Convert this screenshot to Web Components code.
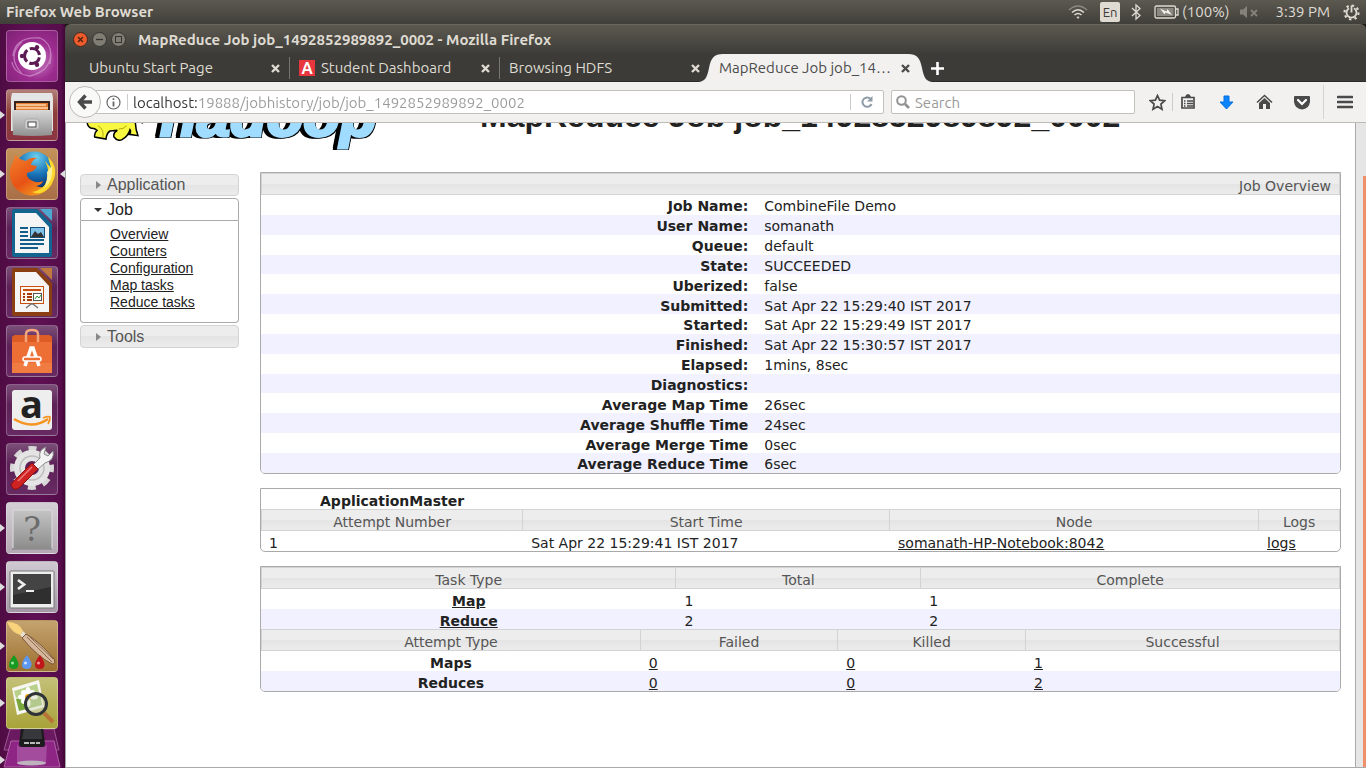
<!DOCTYPE html>
<html lang="en">
<head>
<meta charset="utf-8">
<title>MapReduce Job job_1492852989892_0002</title>
<style>
  body { margin: 0; font-family: Ubuntu, "Noto Sans", sans-serif; font-size: 15px; color: #222; }
</style>
</head>
<body>
<unity-desktop>
  <top-panel slot="panel"></top-panel>
  <app-launcher slot="launcher"></app-launcher>
  <browser-window slot="window" heading="MapReduce Job job_1492852989892_0002 - Mozilla Firefox">
    <browser-tab slot="tabs" label="Ubuntu Start Page"></browser-tab>
    <browser-tab slot="tabs" label="Student Dashboard" icon="A"></browser-tab>
    <browser-tab slot="tabs" label="Browsing HDFS" last></browser-tab>
    <browser-tab slot="tabs" label="MapReduce Job job_14…" active></browser-tab>
    <nav-toolbar slot="toolbar"></nav-toolbar>
    <history-page>
      <history-header slot="header"></history-header>
      <side-nav slot="nav"></side-nav>
      <job-overview></job-overview>
      <app-master></app-master>
      <task-summary></task-summary>
    </history-page>
  </browser-window>
</unity-desktop>

<script>
const define = (name, html, setup) => {
  const template = document.createElement('template');
  template.innerHTML = html;
  customElements.define(name, class extends HTMLElement {
    constructor() {
      super();
      this.attachShadow({ mode: 'open' }).append(template.content.cloneNode(true));
    }
    connectedCallback() { if (setup) setup(this, this.shadowRoot); }
  });
};

define('unity-desktop', `
<style>
  :host { display: grid; grid-template: 24px minmax(0, 1fr) / 65px minmax(0, 1fr); height: 100vh; background: #1e1b18; overflow: hidden; }
  .panel { grid-column: 1 / -1; }
  .launcher, .window { min-height: 0; display: grid; }
</style>
<div class="panel"><slot name="panel"></slot></div>
<div class="launcher"><slot name="launcher"></slot></div>
<div class="window"><slot name="window"></slot></div>`);

define('top-panel', `
<style>
  :host { display: flex; align-items: center; justify-content: space-between; height: 24px; padding: 0 6px;
    background: linear-gradient(#5c5950, #403f3a); color: #dfdbd2; line-height: 20px; }
  b { font-weight: 700; }
  .tray { display: flex; align-items: center; }
  svg { display: block; }
  .wifi { margin-right: 12px; }
  .lang { background: #dfdbd2; color: #3c3b37; border-radius: 2px; width: 20px; text-align: center; font-size: 13px; margin-right: 10px; }
  .bt { margin-right: 12px; }
  .battery { margin-right: 3px; }
  .sound { margin: 0 17px 0 11px; }
  .gear { margin-left: 13px; }
</style>
<b>Firefox Web Browser</b>
<div class="tray">
  <svg class="wifi" width="20" height="16" viewBox="0 0 20 16" fill="none" stroke="#dfdbd2" stroke-width="1.6"><path d="M1 6Q10-2 19 6" stroke="#8d8a82"/><path d="M4 8.500Q10 3 16 8.500M6.500 11Q10 8 13.500 11"/><path d="M8.500 13L10 15L11.500 13Q10 12 8.500 13Z" fill="#dfdbd2" stroke="none"/></svg>
  <span class="lang">En</span>
  <svg class="bt" width="12" height="18" viewBox="0 0 12 18" fill="none" stroke="#dfdbd2" stroke-width="1.300"><path d="M2 5L10 12.500L6 16V2L10 5.500L2 13"/></svg>
  <svg class="battery" width="25" height="14" viewBox="0 0 25 14"><rect x="1" y="1" width="20.500" height="12" rx="1.500" fill="none" stroke="#dfdbd2" stroke-width="1.300"/><rect x="3" y="3" width="16.500" height="8" fill="#8b887f"/><path d="M22 4h2v6h-2" fill="none" stroke="#dfdbd2" stroke-width="1.300"/><path d="M6 3.500L12.500 6.500L13.500 4L18 10L11.500 7.500L10.500 9.500Z" fill="#f2efe8"/></svg>
  <span>(100%)</span>
  <svg class="sound" width="18" height="12" viewBox="0 0 18 12"><path d="M0 3.500h3L7 0v12L3 8.500H0Z" fill="#85827a"/><path d="M11 4L17 10M17 4L11 10" stroke="#85827a" stroke-width="1.800"/></svg>
  <span>3:39 PM</span>
  <svg class="gear" width="17" height="17" viewBox="0 0 17 17" fill="none" stroke="#dfdbd2"><circle cx="8.500" cy="8.500" r="7" stroke-width="2.200" stroke-dasharray="2.400 3.100"/><path d="M6 4.300A5 5 0 1 0 11 4.300M8.500 1.500V8.500" stroke-width="1.800"/></svg>
</div>`);

define('launcher-item', `
<style>
  :host { display: grid; grid-template-columns: 6px 52px 7px; align-items: center; height: 52px; }
  .tile { width: 52px; height: 52px; box-sizing: border-box; border-radius: 4px; border: 1px solid rgba(255,255,255,.25);
    background: var(--tile, linear-gradient(#7a4f78, #5d2157 40%, #672a62)); padding: 0; }
  ::slotted(svg) { display: block; margin: -1px; overflow: visible; }
  .mark { width: 0; height: 0; border: 4px solid transparent; border-right-width: 0; border-left: 5px solid #ddd; visibility: hidden; }
  .mark.right { border-right: 5px solid #ddd; border-left-width: 0; justify-self: end; }
  :host([running]) .left, :host([focused]) .right { visibility: visible; }
</style>
<span class="mark left"></span><button class="tile" type="button"><slot></slot></button><span class="mark right"></span>`,
(host, root) => root.querySelector('button').setAttribute('aria-label', host.getAttribute('name') || ''));

define('app-launcher', `
<style>
  :host { display: flex; flex-direction: column; gap: 7px; padding-top: 6px; box-sizing: border-box; overflow: hidden; min-height: 0;
    background: linear-gradient(90deg, #4f0c43, #5f1054 50%, #560d4b 94%, #3e0735); }
  launcher-item, .folded { flex: none; }
  .lens { margin-top: -2px; margin-bottom: -9px; position: relative; z-index: 1; }
  .folded { display: block; }
  text { user-select: none; }
</style>
<launcher-item name="Search" style="--tile:radial-gradient(circle at 60% 60%,#c77fc2,#9d2c90 45%,#7d2173)">
  <svg width="52" height="52" viewBox="0 0 52 52"><path d="M7 26Q9 6 34 8Q48 14 44 34M44 18Q48 40 24 46Q8 44 6 32M16 12Q0 26 16 44" fill="none" stroke="#d9a5d6" stroke-opacity=".6" stroke-width="1.300"/><circle cx="26" cy="26" r="14" fill="#fff"/><circle cx="26" cy="26" r="7.500" fill="none" stroke="#5c1a53" stroke-width="3" stroke-dasharray="13 2.700" stroke-dashoffset="-1.400"/><circle cx="16" cy="26" r="2.200" fill="#5c1a53"/><circle cx="31" cy="17.300" r="2.200" fill="#5c1a53"/><circle cx="31" cy="34.700" r="2.200" fill="#5c1a53"/></svg></launcher-item>
<launcher-item name="Files" running style="--tile:linear-gradient(#b28078,#8e3f38 45%,#8b3542)">
  <svg width="52" height="52" viewBox="0 0 52 52"><defs><linearGradient id="f" x2="0" y2="1"><stop stop-color="#d8d8d8"/><stop offset="1" stop-color="#909090"/></linearGradient></defs><path d="M6 4H46L47 9V42H5V9Z" fill="#e4e4e4"/><rect x="8" y="12" width="36" height="11" fill="#3a2420"/><path d="M10 14H42V22H10Z" fill="#e37b31"/><path d="M10 16H40M10 19H42" stroke="#fbd7ad" stroke-width="1.300"/><path d="M6 21H46V46Q26 48 7 46Z" fill="url(#f)"/><rect x="19" y="30" width="14" height="10" rx="2" fill="#d2d2d2" stroke="#aaa"/><rect x="22" y="33" width="8" height="5" fill="#fff" stroke="#444"/></svg></launcher-item>
<launcher-item name="Firefox" running focused style="--tile:linear-gradient(#c39159,#a96f48)">
  <svg width="52" height="52" viewBox="0 0 52 52"><defs><radialGradient id="w" cx=".55" cy=".15" r=".8"><stop stop-color="#6fd0ee"/><stop offset=".55" stop-color="#1874b8"/><stop offset="1" stop-color="#0b2d6b"/></radialGradient><linearGradient id="x" x2=".7" y2="1"><stop stop-color="#f4802a"/><stop offset=".6" stop-color="#e65215"/><stop offset="1" stop-color="#f59a20"/></linearGradient></defs><circle cx="28" cy="23" r="19.500" fill="url(#w)"/><path d="M8 12Q3 20 4 28Q6 44 24 47.500Q40 48 47 34Q40 42 30 38Q36 37 37 33Q31 36 25 32Q20 29 21 25L27 23Q30 21 31 18L25 17Q25 13 31 10Q24 9 20 13Q14 12 9 7Z" fill="url(#x)"/><path d="M42 9Q52 18 48 31Q44 42 35 45Q30 46 26 44Q38 42 41 32Q44 22 39 13L45 20Z" fill="#fcd72c"/><path d="M46 18Q48 32 38 41Q42 32 41 24Z" fill="#fdf09a"/></svg></launcher-item>
<launcher-item name="Writer">
  <svg width="52" height="52" viewBox="0 0 52 52"><path d="M8 2H31L46 17V48Q46 50 44 50H8Q6 50 6 48V4Q6 2 8 2Z" fill="#13648f"/><path d="M34 2H46V14Z" fill="#4ea7cf"/><path d="M9 6H30L43 20V46H9Z" fill="#f5f5f5"/><path d="M14 21H22M14 25H22M14 29H22M14 33H38M14 37H38M14 41H32" stroke="#135f8c" stroke-width="2"/><rect x="24.500" y="20.500" width="14" height="10" fill="#7ec2e8" stroke="#134f77"/><path d="M25 30L29 24L32 27L35 25L38 30Z" fill="#333"/></svg></launcher-item>
<launcher-item name="Impress">
  <svg width="52" height="52" viewBox="0 0 52 52"><path d="M8 2H31L46 17V48Q46 50 44 50H8Q6 50 6 48V4Q6 2 8 2Z" fill="#8b3e12"/><path d="M34 2H46V14Z" fill="#c07840"/><path d="M9 6H30L43 20V46H9Z" fill="#f5f5f5"/><rect x="14.500" y="20.500" width="23" height="17" fill="#fff6ec" stroke="#c64f13"/><path d="M17 24H35" stroke="#c64f13" stroke-width="2"/><path d="M17 28H19M17 31H19M17 34H19M21 28H26M21 31H26M21 34H26" stroke="#a33b0a" stroke-width="2"/><rect x="27.500" y="27.500" width="8" height="7" fill="#fff" stroke="#555"/><path d="M29 33L31 30L33 32L35 29" stroke="#2c9b2c" fill="none"/><path d="M20 42L25 38H27L32 42" stroke="#777" stroke-width="1.500" fill="none"/></svg></launcher-item>
<launcher-item name="Software">
  <svg width="52" height="52" viewBox="0 0 52 52"><path d="M6 12L9 10H43L46 12V48H6Z" fill="#ee6f35"/><path d="M6 12L9 10H43L46 12V17H6Z" fill="#dd5c26"/><path d="M6 38H46V48H6Z" fill="#f17c41"/><path d="M20 17V9Q20 5 26 5Q32 5 32 9V17" fill="none" stroke="#f4a57c" stroke-width="2.500"/><path d="M19 41L25 23H27L33 41" fill="none" stroke="#fff" stroke-width="3.500"/><rect x="17" y="32" width="18" height="4" rx="2" fill="#ee6f35" stroke="#fff" stroke-width="1.500"/></svg></launcher-item>
<launcher-item name="Amazon">
  <svg width="52" height="52" viewBox="0 0 52 52"><rect x="6" y="6" width="40" height="40" rx="3" fill="#eee"/><text x="25.500" y="34" text-anchor="middle" font-family="Open Sans" font-weight="700" font-size="38" fill="#222">a</text><path d="M8 35Q26 46 42 35" fill="none" stroke="#f79420" stroke-width="2.600"/><path d="M37 34Q42 32 44 33Q44 37 42 40" fill="none" stroke="#f79420" stroke-width="1.800"/></svg></launcher-item>
<launcher-item name="Settings">
  <svg width="52" height="52" viewBox="0 0 52 52"><circle cx="26" cy="25" r="19.500" fill="none" stroke="#d8d8d8" stroke-width="5" stroke-dasharray="8 7.300" stroke-dashoffset="4"/><circle cx="26" cy="25" r="12.500" fill="none" stroke="#e4e4e4" stroke-width="11"/><circle cx="26" cy="25" r="12" fill="none" stroke="#bdbdbd" stroke-width="1.500"/><path d="M27 22L34 15Q32 7 40 4L38 11L42 13L47 8Q49 17 39 20L31 27Z" fill="#f4f4f4" stroke="#8b8b8b"/><path d="M26 20L32 26L13 45Q8 48 6 44Q4 41 7 39Z" fill="#cf2222" stroke="#8d1010"/><path d="M12 38L26 24" stroke="#f07a7a" stroke-width="1.500"/></svg></launcher-item>
<launcher-item name="Unknown application" running style="--tile:linear-gradient(#d4cfd5,#b3a8b3)">
  <svg width="52" height="52" viewBox="0 0 52 52"><defs><linearGradient id="q" x2="0" y2="1"><stop stop-color="#c4c4c4"/><stop offset="1" stop-color="#8c8c8c"/></linearGradient></defs><rect x="7" y="8" width="39" height="39" rx="1" fill="url(#q)" stroke="#ddd"/><path d="M6 47H46" stroke="#666"/><text x="26" y="39" text-anchor="middle" font-family="DejaVu Serif" font-size="33" fill="#6b6b6b">?</text></svg></launcher-item>
<launcher-item name="Terminal" running style="--tile:linear-gradient(#d0c9d2,#a397a5)">
  <svg width="52" height="52" viewBox="0 0 52 52"><rect x="4" y="10" width="44" height="37" rx="1" fill="#eee" stroke="#777"/><rect x="7" y="13" width="38" height="30" fill="#2e2f2e"/><path d="M7 13H45V26L7 34Z" fill="#444"/><path d="M12 19L18 23.500L12 28" fill="none" stroke="#eee" stroke-width="2.800"/><path d="M20 30H28" stroke="#eee" stroke-width="2"/></svg></launcher-item>
<launcher-item name="Paint" running style="--tile:linear-gradient(#c4a36f,#9d7130)">
  <svg width="52" height="52" viewBox="0 0 52 52"><path d="M1 2Q13 2 17 11L14 15Q6 13 1 2Z" fill="#f9d27c"/><path d="M17 11L21 15L17 18L14 15Z" fill="#e8e0d0"/><path d="M20 14Q34 22 48 39Q50 44 46 44Q32 37 16 18Z" fill="#d5b89b" stroke="#7a5434"/><path d="M21 17L46 42M24 17L47 39" stroke="#8d6a4c"/><path d="M8 35Q13 42 12.500 45Q12 49 8 49Q3 49 3 45Q3 41 8 35Z" fill="#169a22"/><path d="M21 35Q26 42 25.500 45Q25 49 21 49Q16 49 16 45Q16 41 21 35Z" fill="#5c97f0"/><path d="M34 35Q39 42 38.500 45Q38 49 34 49Q29 49 29 45Q29 41 34 35Z" fill="#c0151a"/><circle cx="6.500" cy="43" r="1.500" fill="#9fe8a4"/><circle cx="19.500" cy="43" r="1.500" fill="#d2e4ff"/><circle cx="32.500" cy="43" r="1.500" fill="#f29a9a"/></svg></launcher-item>
<launcher-item class="lens" name="Image viewer" running style="--tile:linear-gradient(#c4c078,#a9a33a)">
  <svg width="52" height="52" viewBox="0 0 52 52"><path d="M6 11L33 3L38 30L11 38Z" fill="#f6f6f2"/><path d="M8 14L31 7L33 15L10 21Z" fill="#b9d08a"/><path d="M10 22L34 16L36 28L13 34Z" fill="#7ba83c"/><g fill="#fff"><ellipse cx="22" cy="14" rx="2.500" ry="4"/><ellipse cx="22" cy="26" rx="2.500" ry="4"/><ellipse cx="16" cy="20" rx="4" ry="2.500"/><ellipse cx="28" cy="20" rx="4" ry="2.500"/><circle cx="18" cy="16" r="3"/><circle cx="26" cy="16" r="3"/><circle cx="18" cy="24" r="3"/></g><circle cx="22" cy="20" r="3" fill="#eda21c"/><circle cx="30" cy="27" r="10.500" fill="#d8dfc4" fill-opacity=".6" stroke="#2f3436" stroke-width="3"/><path d="M38 36L47 45" stroke="#b87436" stroke-width="4"/></svg></launcher-item>
<svg class="folded" width="65" height="44" viewBox="0 0 65 44"><path d="M0 29L5 33L0 37Z" fill="#ddd"/><path d="M10 2H54L59 23L4 23Z" fill="#6b1a61" stroke="#9a5592"/><path d="M11 14H54L60 40H4Z" fill="#8e2484" stroke="#b060a8"/><path d="M21 0H43L45 17Q45 20 42 20H22Q19 20 19 17Z" fill="#1c1c1e"/><path d="M24 1H41L42 12H22Z" fill="#37383b"/><path d="M24 16H40" stroke="#eee" stroke-width="1.500" stroke-dasharray="5 1"/><path d="M17 17L19 20H45L47 17L46 36H17Z" fill="#b56bb0" fill-opacity=".55"/><ellipse cx="31.500" cy="36" rx="14.500" ry="2.500" fill="#bdb2bd"/></svg>`);

define('browser-tab', `
<style>
  :host { display: flex; align-items: center; position: relative; box-sizing: border-box; flex: 0 1 210px; min-width: 0; height: 28px; padding: 0 9px 0 10px; color: #dfdbd2; line-height: 20px; }
  :host::after { content: ""; position: absolute; right: -1px; top: 3px; width: 1px; height: 22px; background: #77756f; }
  :host([last])::after, :host([active])::after { display: none; }
  .label { flex: 1; min-width: 0; white-space: nowrap; overflow: hidden; position: relative; }
  .icon { display: none; width: 16px; height: 16px; line-height: 16px; margin-right: 6px; background: #e8363f; color: #fff; font-size: 16px; font-weight: 700; text-align: center; }
  :host([icon]) .icon { display: block; }
  .close { all: unset; position: relative; width: 9px; height: 9px; }
  .close svg { display: block; }
  .shape { display: none; position: absolute; left: -10px; right: -13px; top: 0; height: 28px; }
  :host([active]) .shape { display: flex; }
  .shape i { flex: 1; background: #f2f1f0; }
  :host([active]) { color: #4c4c4c; }
</style>
<span class="shape"><svg width="24" height="28" viewBox="0 0 24 28"><path d="M0 28C6 27 8 24 10 14C12 4 15 0 24 0V28Z" fill="#f2f1f0"/></svg><i></i><svg width="24" height="28" viewBox="0 0 24 28"><path d="M24 28C18 27 16 24 14 14C12 4 9 0 0 0V28Z" fill="#f2f1f0"/></svg></span>
<span class="icon"></span><span class="label"></span>
<button class="close" type="button" aria-label="Close tab"><svg width="9" height="9" viewBox="0 0 9 9"><path d="M1 1L8 8M8 1L1 8" stroke="currentColor" stroke-width="2.400"/></svg></button>`,
(host, root) => {
  root.querySelector('.label').textContent = host.getAttribute('label');
  root.querySelector('.icon').textContent = host.getAttribute('icon') || '';
});

define('browser-window', `
<style>
  :host { display: flex; flex-direction: column; min-height: 0; }
  .frame { background: linear-gradient(#5c5950, #3c3b37 30px); border-radius: 6px 6px 0 0; border-top: 1px solid #6a675c; box-sizing: border-box; height: 58px; border-bottom: 1px solid #2b2a27; display: flex; flex-direction: column; }
  .title { display: flex; align-items: center; height: 29px; padding-left: 8px; gap: 4px; color: #dfdbd2; font-weight: 700; flex: none; }
  .title button { all: unset; width: 15px; height: 15px; display: block; }
  .title svg { display: block; }
  .title span { margin-left: 8px; line-height: 20px; white-space: nowrap; }
  .tabs { display: flex; align-items: center; padding-left: 14px; flex: none; height: 28px; }
  .add { all: unset; margin-left: 12px; }
  .add svg { display: block; }
  .page { flex: 1; min-height: 0; display: grid; }
</style>
<div class="frame">
  <div class="title">
    <button type="button" aria-label="Close"><svg width="15" height="15" viewBox="0 0 15 15"><circle cx="7.500" cy="7.500" r="7" fill="#ef5c2c" stroke="#3b2a22"/><path d="M5 5L10 10M10 5L5 10" stroke="#4a2012" stroke-width="1.300"/></svg></button>
    <button type="button" aria-label="Minimize"><svg width="15" height="15" viewBox="0 0 15 15"><circle cx="7.500" cy="7.500" r="7" fill="#807d74" stroke="#35342f"/><path d="M4 7.500H11" stroke="#35342f" stroke-width="1.300"/></svg></button>
    <button type="button" aria-label="Maximize"><svg width="15" height="15" viewBox="0 0 15 15"><circle cx="7.500" cy="7.500" r="7" fill="#807d74" stroke="#35342f"/><rect x="4.500" y="4.500" width="6" height="6" fill="none" stroke="#35342f"/></svg></button>
    <span></span>
  </div>
  <div class="tabs"><slot name="tabs"></slot><button class="add" type="button" aria-label="New tab"><svg width="13" height="13" viewBox="0 0 13 13"><path d="M6.500 0V13M0 6.500H13" stroke="#fff" stroke-width="2.600"/></svg></button></div>
</div>
<slot name="toolbar"></slot>
<div class="page"><slot></slot></div>`,
(host, root) => { root.querySelector('.title span').textContent = host.getAttribute('heading'); });

define('nav-toolbar', `
<style>
  :host { display: flex; align-items: center; height: 40px; box-sizing: content-box; background: #f2f1f0; border-bottom: 1px solid #bdbbb8; padding-left: 4px; flex: none; }
  svg { display: block; }
  button { all: unset; display: flex; align-items: center; justify-content: center; flex: none; }
  .back { width: 32px; height: 32px; box-sizing: border-box; border: 1px solid #bcbab7; border-radius: 50%; background: #f9f9f8; position: relative; }
  .url, .search { display: flex; align-items: center; box-sizing: border-box; height: 24px; border: 1px solid #c3c1be; background: #fff; border-radius: 2px; }
  .url { flex: 1; margin-left: -12px; padding-left: 16px; min-width: 0; }
  .info { width: 15px; height: 15px; }
  .sep { width: 1px; height: 16px; background: #ccc; flex: none; }
  .url .info + .sep { margin: 0 5px 0 6px; }
  input { all: unset; font: inherit; height: 22px; line-height: 20px; min-width: 0; flex: 1; }
  #address { color: #999; -webkit-text-fill-color: transparent; background: linear-gradient(90deg, #333 66px, #999 66px); -webkit-background-clip: text; background-clip: text; }
  .reload { width: 32px; }
  .search { width: 244px; margin-left: 7px; padding-left: 4px; gap: 5px; }
  .search input::placeholder { color: #999; opacity: 1; }
  .star { margin-left: 13px; width: 18px; }
  .tool { width: 38px; }
  .star + .sep { margin-left: 6px; height: 18px; margin-right: -4px; }
  .menu { width: 42px; }
  .tall { height: 34px; margin-left: 2px; background: #d6d4d2; }
</style>
<button class="back" type="button" aria-label="Back"><svg width="16" height="16" viewBox="0 0 16 16"><path d="M8.500 1.500L2.500 8L8.500 14.500M3 8H15" fill="none" stroke="#4a4a4a" stroke-width="3.400"/></svg></button>
<div class="url">
  <button class="info" type="button" aria-label="Site information"><svg width="15" height="15" viewBox="0 0 15 15"><circle cx="7.500" cy="7.500" r="6.500" fill="none" stroke="#666" stroke-width="1.200"/><path d="M7.500 3.300V5M7.500 6.500V11.500" stroke="#666" stroke-width="1.800"/></svg></button>
  <span class="sep"></span>
  <input id="address" aria-label="Address" value="localhost:19888/jobhistory/job/job_1492852989892_0002">
  <span class="sep"></span>
  <button class="reload" type="button" aria-label="Reload"><svg width="12" height="12" viewBox="0 0 12 12"><path d="M9.500 2.800A4.700 4.700 0 1 0 10.500 8" fill="none" stroke="#8e9aa6" stroke-width="2"/><path d="M11.500 0V5.500H6Z" fill="#8e9aa6"/></svg></button>
</div>
<div class="search">
  <svg width="14" height="14" viewBox="0 0 14 14" fill="none" stroke="#929292"><circle cx="5.500" cy="5.500" r="4.300" stroke-width="2"/><path d="M9 9L13 13" stroke-width="2.600"/></svg>
  <input type="search" aria-label="Search" placeholder="Search">
</div>
<button class="star" type="button" aria-label="Bookmark"><svg width="17" height="17" viewBox="0 0 17 17"><path d="M8.500 1.500L10.600 6.200L15.700 6.700L11.900 10.100L13 15.200L8.500 12.600L4 15.200L5.100 10.100L1.300 6.700L6.400 6.200Z" fill="none" stroke="#4a4a4a" stroke-width="1.700"/></svg></button>
<span class="sep"></span>
<button class="tool" type="button" aria-label="Bookmarks list"><svg width="16" height="16" viewBox="0 0 16 16"><path d="M2 3.500H14V14H2Z" fill="none" stroke="#4a4a4a" stroke-width="1.700"/><path d="M5 3Q6 0 8 0Q10 0 11 3Z" fill="#4a4a4a"/><path d="M4 7H5.500M7 7H13M4 9.500H5.500M7 9.500H13M4 12H5.500M7 12H13" stroke="#4a4a4a" stroke-width="1.300"/></svg></button>
<button class="tool" type="button" aria-label="Downloads"><svg width="15" height="15" viewBox="0 0 15 15"><path d="M5 1H10V7H14L7.500 14L1 7H5Z" fill="#0a84ff" stroke="#0670e0"/></svg></button>
<button class="tool" type="button" aria-label="Home"><svg width="17" height="16" viewBox="0 0 17 16"><path d="M1 8.500L8.500 1.500L16 8.500" fill="none" stroke="#4a4a4a" stroke-width="1.500"/><path d="M3 9L8.500 4L14 9V15H10V10H7V15H3Z" fill="#4a4a4a"/></svg></button>
<button class="tool" type="button" aria-label="Pocket"><svg width="16" height="15" viewBox="0 0 16 15"><path d="M1 1H15Q16 1 16 2V7Q15 14 8 14.500Q1 14 0 7V2Q0 1 1 1Z" fill="#4a4a4a"/><path d="M4 5L8 9L12 5" fill="none" stroke="#fff" stroke-width="2.200" stroke-linecap="round"/></svg></button>
<span class="sep tall"></span>
<button class="menu" type="button" aria-label="Menu"><svg width="16" height="14" viewBox="0 0 16 14"><path d="M1 2H15M1 7H15M1 12H15" stroke="#4a4a4a" stroke-width="2.600" stroke-linecap="round"/></svg></button>`);

define('history-page', `
<style>
  :host { display: grid; grid-template-columns: minmax(0, 1fr) 10px; min-height: 0; border-left: 1px solid #a3a3a3; border-bottom: 1px solid #aaa; background: #fff; }
  .view { overflow: hidden; min-height: 0; padding: 0 14px; border-right: 1px solid #aaa; }
  .cols { display: grid; grid-template-columns: 159px minmax(0, 1fr); gap: 21px; align-items: start; }
  main { display: flex; flex-direction: column; gap: 14px; font-family: "DejaVu Sans", sans-serif; }
  nav { padding-top: 2px; }
  .bar { background: #e6e6e6; display: flex; flex-direction: column; align-items: flex-end; padding-top: 53px; }
  .bar i { width: 3px; flex: 1; background: #f0906a; }
</style>
<div class="view"><slot name="header"></slot><div class="cols"><nav><slot name="nav"></slot></nav><main><slot></slot></main></div></div>
<div class="bar"><i></i></div>`);

/* The page is scrolled: the header hangs from its bottom edge and is cut off by the view. */
define('history-header', `
<style>
  :host { display: flex; align-items: flex-end; height: 49px; font-family: "Liberation Sans", Arial, sans-serif; }
  .logo { display: flex; align-items: flex-end; width: 400px; flex: none; }
  svg { display: block; margin: 0 12px 31px 6px; flex: none; }
  .word { font-size: 60px; line-height: 60px; font-weight: 700; font-style: italic; color: #a0dcff; margin-bottom: 26px;
    -webkit-text-stroke: 3px #a0dcff; text-shadow: 2px 0 #000, 0 2px #000, 2px 2px #000, -2px 2px #000, -4px 2px #000, -6px 2px #000, -3px 0 #000, -6px 0 #000; }
  h1 { margin: 0 0 38px; font-size: 32px; line-height: 36px; white-space: nowrap; }
</style>
<div class="logo">
  <svg width="62" height="20" viewBox="20 30 186 60"><path d="M24 30Q22 46 36 52Q44 50 53 58Q44 66 46 78L80 84Q82 66 92 60L114 58Q100 66 104 78Q114 92 128 86Q146 76 152 56Q156 62 150 70L176 74Q168 54 168 30Z" fill="#f8f840" stroke="#000" stroke-width="4.500"/><path d="M56 44Q76 56 70 80M118 54Q132 56 142 44" fill="none" stroke="#b8a90c" stroke-width="3"/><path d="M180 30L198 34L188 38Z"/></svg>
  <span class="word">hadoop</span>
</div>
<h1>MapReduce Job job_1492852989892_0002</h1>`);

define('side-nav', `
<style>
  :host { display: flex; flex-direction: column; gap: 2px; font-family: "Liberation Sans", Arial, sans-serif; }
  h3 { margin: 0; }
  h3 button { all: unset; box-sizing: border-box; display: flex; align-items: center; width: 100%; height: 22px; padding-left: 15px; border: 1px solid #d3d3d3; border-radius: 4px;
    background: linear-gradient(#ededed 50%, #e4e4e4 50%, #ececec); font-size: 16px; font-weight: 400; line-height: 20px; color: #555; }
  h3 button::before { content: ""; border: 4px solid transparent; border-left: 5px solid #888; border-right-width: 0; width: 0; margin-right: 6px; }
  h3 button.open { height: 23px; color: #212121; border-color: #aaa; background: #fff; border-radius: 4px 4px 0 0; padding-left: 13px; }
  h3 button.open::before { border: 4px solid transparent; border-top-color: #333; border-bottom-width: 0; margin-right: 5px; }
  ul { margin: 0; padding: 5px 0 11px 29px; list-style: none; border: 1px solid #aaa; border-top: 0; border-radius: 0 0 4px 4px; font-size: 14px; line-height: 17px; }
  a { color: #212121; }
  .last button { height: 23px; }
</style>
<h3><button type="button" aria-expanded="false">Application</button></h3>
<div>
  <h3><button class="open" type="button" aria-expanded="true">Job</button></h3>
  <ul><li><a href="#overview">Overview</a></li><li><a href="#counters">Counters</a></li><li><a href="#conf">Configuration</a></li><li><a href="#maps">Map tasks</a></li><li><a href="#reduces">Reduce tasks</a></li></ul>
</div>
<h3 class="last"><button type="button" aria-expanded="false">Tools</button></h3>`);

const tableStyles = `
  :host { display: block; border: 1px solid #aaa; border-radius: 0 0 5px 5px; overflow: hidden; font-size: 14px; color: #222; }
  table { width: 100%; table-layout: fixed; border-collapse: separate; border-spacing: 0; }
  th, td { padding: 3px 8px 0; line-height: 16px; height: 20px; box-sizing: border-box; text-align: left; white-space: nowrap; }
  th { text-align: center; font-weight: 700; }
  .head th { height: 22px; font-weight: 400; color: #555; border: 1px solid #d3d3d3; border-left-width: 0;
    background: linear-gradient(#ededed 50%, #e4e4e4 50%, #ececec); }
  .head th:first-child { border-left-width: 1px; }
  .even { background: #f1f1ff; }
  a { color: #222; }`;

define('job-overview', `
<style>${tableStyles}
  table { height: 300px; }
  .head th { text-align: right; }
  tbody th, tbody td { height: 19px; }
  tbody th { text-align: right; }
</style>
<table><colgroup><col style="width:45.9%"><col></colgroup><thead><tr class="head"><th colspan="2">Job Overview</th></tr></thead><tbody></tbody></table>`,
(host, root) => {
  const rows = [
    ['Job Name:', 'CombineFile Demo'], ['User Name:', 'somanath'], ['Queue:', 'default'], ['State:', 'SUCCEEDED'],
    ['Uberized:', 'false'], ['Submitted:', 'Sat Apr 22 15:29:40 IST 2017'], ['Started:', 'Sat Apr 22 15:29:49 IST 2017'],
    ['Finished:', 'Sat Apr 22 15:30:57 IST 2017'], ['Elapsed:', '1mins, 8sec'], ['Diagnostics:', ''],
    ['Average Map Time', '26sec'], ['Average Shuffle Time', '24sec'], ['Average Merge Time', '0sec'], ['Average Reduce Time', '6sec']
  ];
  root.querySelector('tbody').innerHTML = rows.map(([k, v], i) =>
    `<tr class="${i % 2 ? 'even' : 'odd'}"><th scope="row">${k}</th><td>${v}</td></tr>`).join('');
});

define('app-master', `
<style>${tableStyles}</style>
<table><colgroup><col style="width:24.3%"><col style="width:34%"><col style="width:34.2%"><col></colgroup>
<tbody>
<tr><th>ApplicationMaster</th><td colspan="3"></td></tr>
<tr class="head"><th>Attempt Number</th><th>Start Time</th><th>Node</th><th>Logs</th></tr>
<tr><td>1</td><td>Sat Apr 22 15:29:41 IST 2017</td><td><a href="#node">somanath-HP-Notebook:8042</a></td><td><a href="#logs">logs</a></td></tr>
</tbody></table>`);

define('task-summary', `
<style>${tableStyles}</style>
<table><colgroup><col style="width:38.5%"><col style="width:22.7%"><col></colgroup>
<tbody>
<tr class="head"><th>Task Type</th><th>Total</th><th>Complete</th></tr>
<tr><th scope="row"><a href="#map">Map</a></th><td>1</td><td>1</td></tr>
<tr class="even"><th scope="row"><a href="#reduce">Reduce</a></th><td>2</td><td>2</td></tr>
</tbody></table>
<table><colgroup><col style="width:35.2%"><col style="width:18.3%"><col style="width:17.4%"><col></colgroup>
<tbody>
<tr class="head"><th>Attempt Type</th><th>Failed</th><th>Killed</th><th>Successful</th></tr>
<tr><th scope="row">Maps</th><td><a href="#mf">0</a></td><td><a href="#mk">0</a></td><td><a href="#ms">1</a></td></tr>
<tr class="even"><th scope="row">Reduces</th><td><a href="#rf">0</a></td><td><a href="#rk">0</a></td><td><a href="#rs">2</a></td></tr>
</tbody></table>`);
</script>
</body>
</html>
